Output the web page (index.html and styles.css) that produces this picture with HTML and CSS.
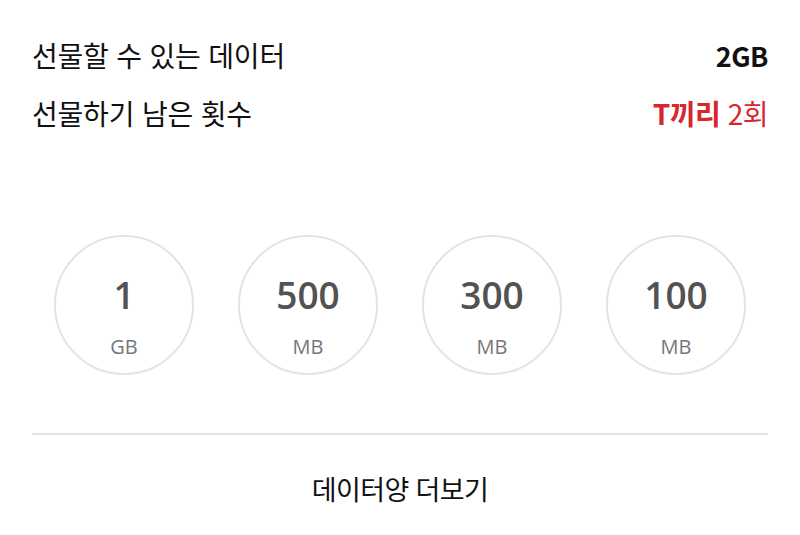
FILE: index.html
```html
<!DOCTYPE html>
<html lang="ko">
<head>
<meta charset="utf-8">
<link rel="stylesheet" href="styles.css">
</head>
<body>
<div class="page">
  <div class="summary">
    <div class="row">
      <span class="label">선물할 수 있는 데이터</span>
      <span class="value">2GB</span>
    </div>
    <div class="row">
      <span class="label">선물하기 남은 횟수</span>
      <span class="value red"><b>T끼리</b> 2회</span>
    </div>
  </div>
  <div class="amounts">
    <div class="cell"><div class="circle"><span class="num">1</span><span class="unit">GB</span></div></div>
    <div class="cell"><div class="circle"><span class="num">500</span><span class="unit">MB</span></div></div>
    <div class="cell"><div class="circle"><span class="num">300</span><span class="unit">MB</span></div></div>
    <div class="cell"><div class="circle"><span class="num">100</span><span class="unit">MB</span></div></div>
  </div>
  <div class="more">데이터양 더보기</div>
</div>
</body>
</html>
```
FILE: styles.css
```css
html, body {
  margin: 0;
  padding: 0;
  background: #fff;
}
.page {
  padding: 0 32px;
  font-family: "Noto Sans CJK KR", "Noto Sans", sans-serif;
  color: #111;
}
.summary {
  padding-top: 26px;
}
.row {
  height: 58px;
  display: flex;
  align-items: center;
  justify-content: space-between;
}
.label {
  font-size: 28px;
  letter-spacing: -0.2px;
}
.value {
  font-size: 27px;
  font-weight: 700;
  letter-spacing: -0.5px;
}
.value.red {
  font-size: 28px;
  color: #d8262e;
  font-weight: 400;
}
.value.red b {
  font-weight: 700;
}
.amounts {
  margin-top: 93px;
  display: grid;
  grid-template-columns: repeat(4, 1fr);
  padding-bottom: 58px;
  border-bottom: 2px solid #e2e2e2;
}
.cell {
  display: flex;
  justify-content: center;
}
.circle {
  width: 136px;
  height: 136px;
  border: 2px solid #e4e4e4;
  border-radius: 50%;
  display: flex;
  flex-direction: column;
  align-items: center;
  font-family: "Open Sans", sans-serif;
  box-sizing: content-box;
}
.num {
  margin-top: 38px;
  font-size: 37px;
  line-height: 40px;
  font-weight: 600;
  color: #525252;
}
.unit {
  margin-top: 21px;
  font-size: 20px;
  line-height: 22px;
  color: #777;
}
.more {
  height: 106px;
  display: flex;
  align-items: center;
  justify-content: center;
  font-size: 27px;
  letter-spacing: -0.6px;
  color: #111;
}
```
